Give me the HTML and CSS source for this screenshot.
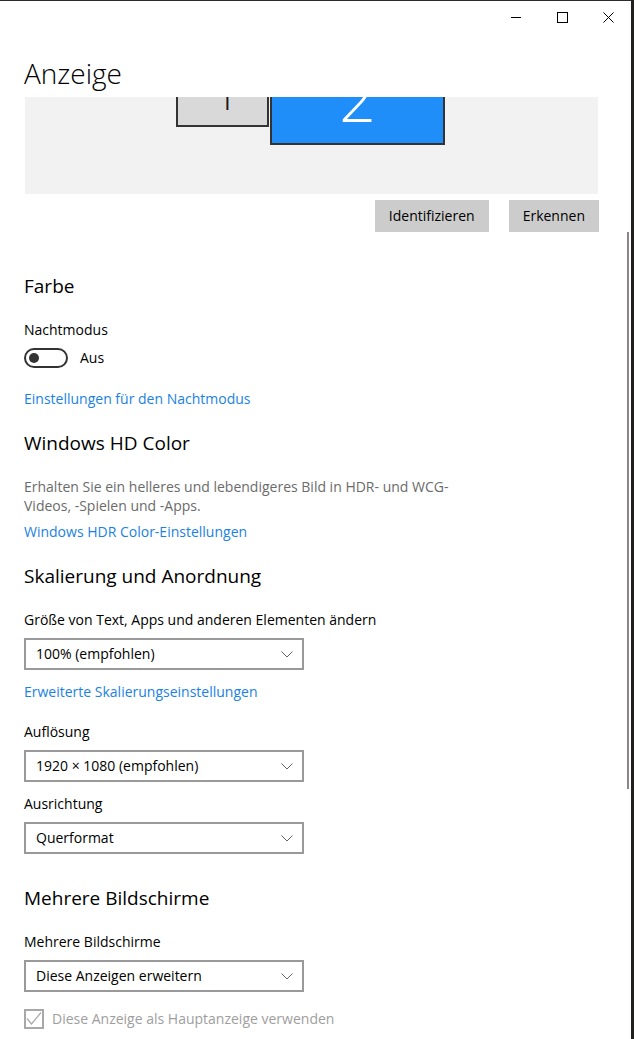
FILE: index.html
```html
<!DOCTYPE html>
<html lang="de">
<head>
<meta charset="utf-8">
<title>Anzeige</title>
<link rel="stylesheet" href="styles.css">
</head>
<body>
<div class="window">
  <div class="titlebar">
    <span class="caption-btn">
      <svg width="10" height="10" viewBox="0 0 10 10"><path d="M0 5.5H10" stroke="#000" stroke-width="1"/></svg>
    </span>
    <span class="caption-btn">
      <svg width="11" height="11" viewBox="0 0 11 11"><rect x="0.5" y="0.5" width="10" height="10" fill="none" stroke="#000" stroke-width="1"/></svg>
    </span>
    <span class="caption-btn">
      <svg width="11" height="11" viewBox="0 0 11 11"><path d="M0.5 0.5L10.5 10.5M10.5 0.5L0.5 10.5" stroke="#000" stroke-width="1"/></svg>
    </span>
  </div>

  <h1 class="page-title">Anzeige</h1>

  <div class="scroll-pane">
    <div class="content">
      <div class="preview">
        <div class="monitor monitor-1">1</div>
        <div class="monitor monitor-2">2</div>
      </div>
      <div class="actions">
        <button class="btn">Identifizieren</button>
        <button class="btn">Erkennen</button>
      </div>

      <section class="section section-first">
        <h2 class="section-title">Farbe</h2>
        <div class="field-label">Nachtmodus</div>
        <div class="toggle-row">
          <span class="toggle"><span class="knob"></span></span>
          <span>Aus</span>
        </div>
        <a class="link link-after-toggle">Einstellungen für den Nachtmodus</a>
      </section>

      <section class="section">
        <h2 class="section-title">Windows HD Color</h2>
        <p class="description">Erhalten Sie ein helleres und lebendigeres Bild in HDR- und WCG-Videos, -Spielen und -Apps.</p>
        <a class="link link-after-text">Windows HDR Color-Einstellungen</a>
      </section>

      <section class="section">
        <h2 class="section-title">Skalierung und Anordnung</h2>
        <div class="field-label">Größe von Text, Apps und anderen Elementen ändern</div>
        <div class="select"><span>100% (empfohlen)</span><svg class="chevron" width="12" height="7" viewBox="0 0 12 7"><path d="M0.5 0.5L6 6L11.5 0.5" fill="none" stroke="#666" stroke-width="1"/></svg></div>
        <a class="link">Erweiterte Skalierungseinstellungen</a>
        <div class="field-label field-gap">Auflösung</div>
        <div class="select"><span>1920 × 1080 (empfohlen)</span><svg class="chevron" width="12" height="7" viewBox="0 0 12 7"><path d="M0.5 0.5L6 6L11.5 0.5" fill="none" stroke="#666" stroke-width="1"/></svg></div>
        <div class="field-label">Ausrichtung</div>
        <div class="select"><span>Querformat</span><svg class="chevron" width="12" height="7" viewBox="0 0 12 7"><path d="M0.5 0.5L6 6L11.5 0.5" fill="none" stroke="#666" stroke-width="1"/></svg></div>
      </section>

      <section class="section section-wide">
        <h2 class="section-title">Mehrere Bildschirme</h2>
        <div class="field-label">Mehrere Bildschirme</div>
        <div class="select"><span>Diese Anzeigen erweitern</span><svg class="chevron" width="12" height="7" viewBox="0 0 12 7"><path d="M0.5 0.5L6 6L11.5 0.5" fill="none" stroke="#666" stroke-width="1"/></svg></div>
        <label class="checkbox-row">
          <span class="checkbox"><svg width="16" height="16" viewBox="0 0 16 16"><path d="M1 7.5L5.5 13L15 1.5" fill="none" stroke="#a8a8a8" stroke-width="1.2"/></svg></span>
          <span>Diese Anzeige als Hauptanzeige verwenden</span>
        </label>
      </section>
    </div>
    <div class="scrollbar"></div>
  </div>
</div>
</body>
</html>
```

FILE: styles.css
```css
* {
  box-sizing: border-box;
}

html,
body {
  margin: 0;
  height: 100%;
}

body {
  background: #221f1e;
  font-family: "Open Sans", "Noto Sans", sans-serif;
  font-size: 14px;
  line-height: 20px;
  color: #000;
  overflow: hidden;
}

.window {
  width: 631px;
  height: 1039px;
  background: #fff;
  border-top: 1px solid #2b2b2b;
  overflow: hidden;
}

/* caption buttons */
.titlebar {
  display: flex;
  justify-content: flex-end;
  height: 32px;
}

.caption-btn {
  width: 46px;
  height: 32px;
  display: flex;
  align-items: center;
  justify-content: center;
}

.caption-btn svg {
  display: block;
}

.page-title {
  margin: 22px 0 6px 24px;
  font-size: 28px;
  font-weight: 300;
  line-height: 36px;
}

.scroll-pane {
  position: relative;
  height: 942px;
  overflow: hidden;
}

.content {
  padding: 0 32px 0 24px;
}

/* monitor arrangement */
.preview {
  position: relative;
  height: 97px;
  margin: 0 1px;
  background: #f2f2f2;
  overflow: hidden;
}

.monitor {
  position: absolute;
  border: 2px solid #333;
  text-align: center;
  font-weight: 300;
  line-height: 1;
}

.monitor-1 {
  left: 151px;
  top: -24px;
  width: 93px;
  height: 54px;
  padding-left: 8px;
  background: #d9d9d9;
  color: #1a1a1a;
  font-size: 40px;
}

.monitor-2 {
  left: 245px;
  top: -51px;
  width: 175px;
  height: 99px;
  padding-top: 18px;
  background: #1f8ef9;
  color: #fff;
  font-size: 64px;
}

.actions {
  display: flex;
  justify-content: flex-end;
  gap: 20px;
  margin-top: 6px;
}

.btn {
  height: 32px;
  padding: 0 14px;
  border: 0;
  background: #ccc;
  font: inherit;
  color: #000;
}

/* sections */
.section {
  margin-top: 20px;
}

.section-first {
  margin-top: 40px;
}

.section-wide {
  margin-top: 30px;
}

.section-title {
  margin: 1px 0 20px;
  font-size: 19px;
  font-weight: 400;
  line-height: 28px;
}

.field-label {
  margin-bottom: 8px;
}

.field-gap {
  margin-top: 20px;
}

.toggle-row {
  display: flex;
  align-items: center;
  gap: 12px;
  margin-top: 1px;
  height: 20px;
}

.toggle {
  display: flex;
  align-items: center;
  width: 44px;
  height: 20px;
  padding-left: 3px;
  border: 2px solid #333;
  border-radius: 10px;
}

.knob {
  width: 10px;
  height: 10px;
  border-radius: 50%;
  background: #333;
}

.link {
  display: block;
  color: #1a82e2;
  text-decoration: none;
}

.link-after-toggle {
  margin-top: 21px;
}

.link-after-text {
  margin-top: 7px;
}

.description {
  margin: 0;
  max-width: 450px;
  line-height: 19px;
  color: #6b6b6b;
}

.select {
  display: flex;
  align-items: center;
  justify-content: space-between;
  width: 280px;
  height: 32px;
  margin-bottom: 12px;
  padding: 0 9px 0 10px;
  border: 2px solid #999;
}

.section-wide .select {
  margin-bottom: 17px;
}

.chevron {
  display: block;
}

.checkbox-row {
  display: flex;
  align-items: center;
  gap: 8px;
  color: #9e9e9e;
}

.checkbox {
  display: flex;
  align-items: center;
  justify-content: center;
  width: 20px;
  height: 20px;
  border: 2px solid #a8a8a8;
}

.scrollbar {
  position: absolute;
  right: 2px;
  top: 135px;
  width: 2px;
  height: 557px;
  background: #878787;
}
```
